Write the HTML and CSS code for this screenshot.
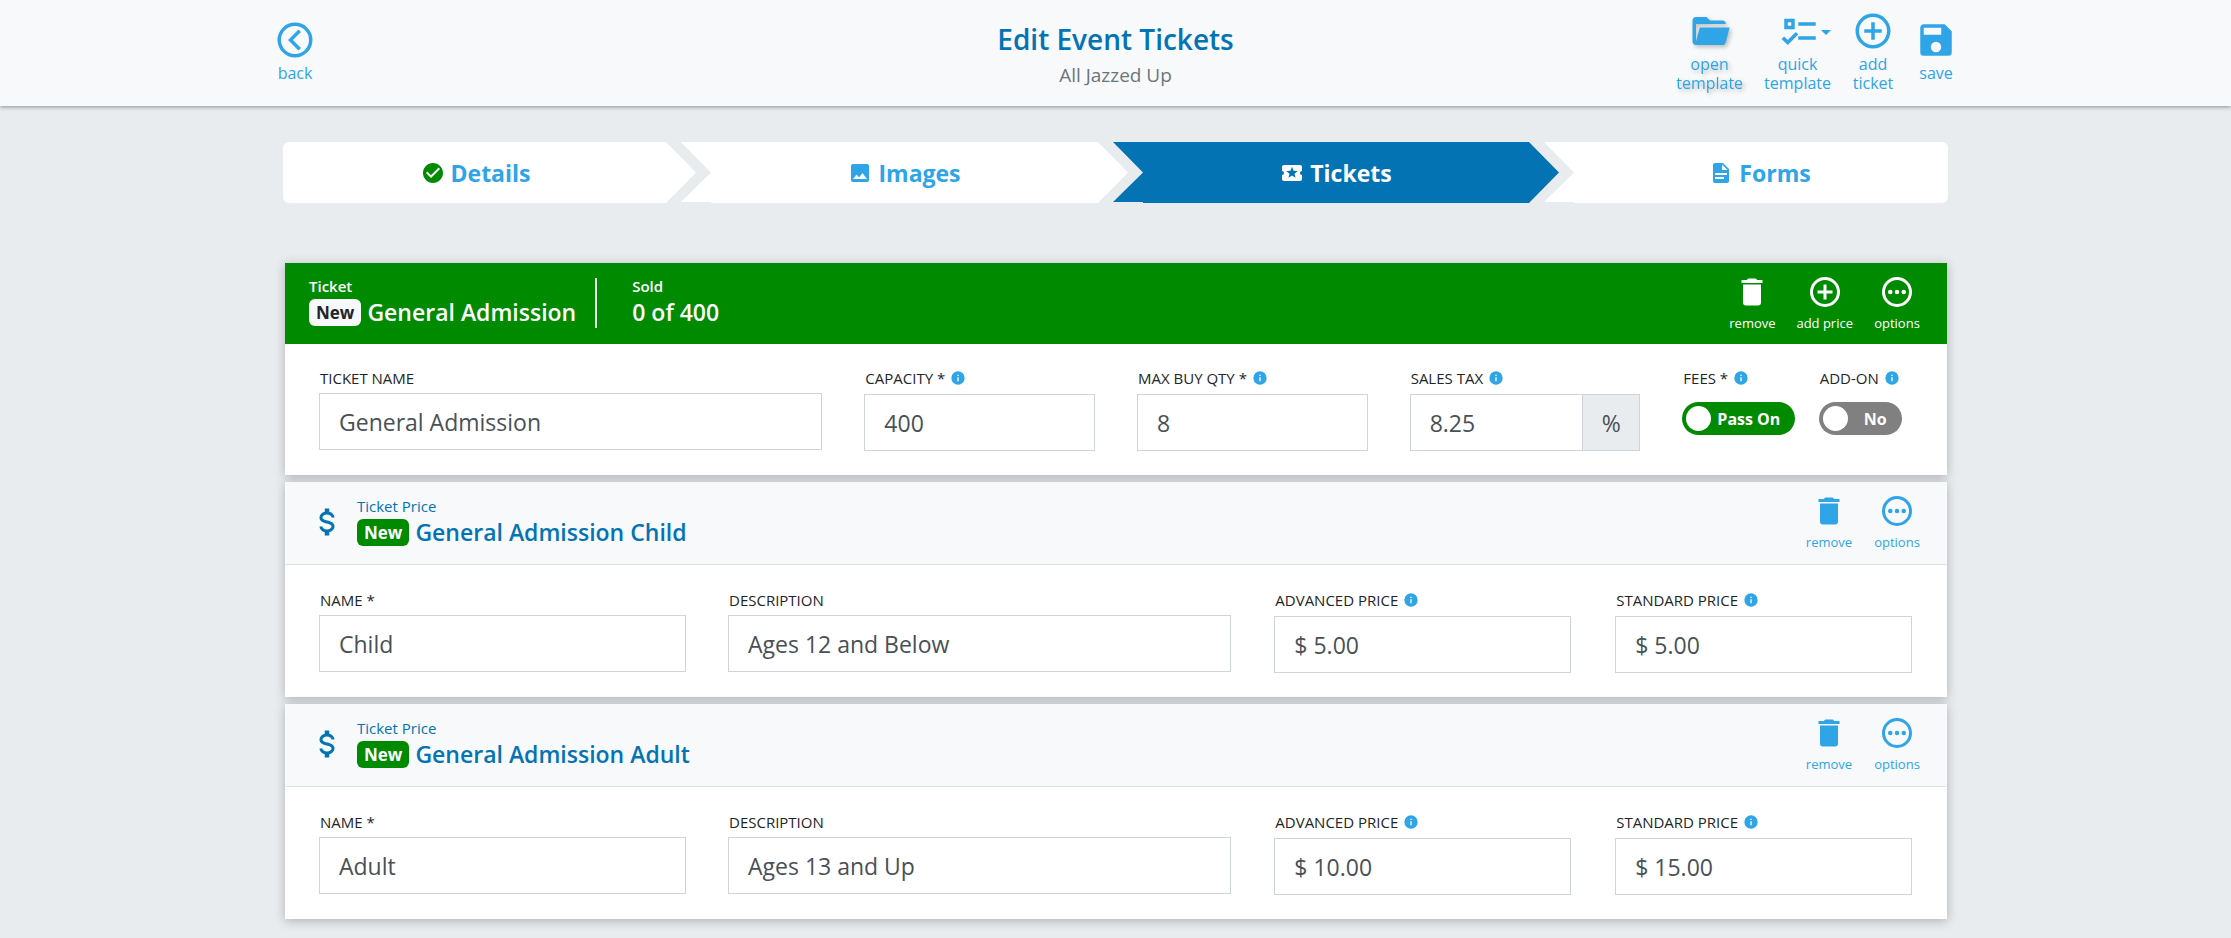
FILE: index.html
```html
<!DOCTYPE html>
<html lang="en">
<head>
<meta charset="utf-8">
<title>Edit Event Tickets</title>
<meta name="viewport" content="width=device-width, initial-scale=1">
<link rel="stylesheet" href="styles.css">
</head>
<body>
<svg class="sprite" aria-hidden="true">
  <symbol id="i-back" viewBox="0 0 24 24"><path d="M12 2a10 10 0 1 0 0 20 10 10 0 0 0 0-20m0 18a8 8 0 1 1 0-16 8 8 0 0 1 0 16M15.4 16.6 10.8 12l4.600-4.600L14 6l-6 6 6 6z"/></symbol>
  <symbol id="i-folder" viewBox="0 0 24 24"><path d="M19,20H4C2.89,20 2,19.1 2,18V6C2,4.890 2.890,4 4,4H10L12,6H19A2,2 0 0,1 21,8H4V18L6.140,10H23.210L20.930,18.500C20.700,19.370 19.920,20 19,20Z"/></symbol>
  <symbol id="i-checks" viewBox="0 0 24 24"><path d="M3,5H9V11H3V5M5,7V9H7V7H5M11,7H21V9H11V7M11,15H21V17H11V15M5,20L1.5,16.5L2.910,15.090L5,17.170L9.590,12.590L11,14L5,20Z"/></symbol>
  <symbol id="i-plus" viewBox="0 0 24 24"><path d="M12 2a10 10 0 1 0 0 20 10 10 0 0 0 0-20m0 18a8 8 0 1 1 0-16 8 8 0 0 1 0 16M13 7H11V11H7V13H11V17H13V13H17V11H13Z"/></symbol>
  <symbol id="i-dots" viewBox="0 0 24 24"><path d="M12 2a10 10 0 1 0 0 20 10 10 0 0 0 0-20m0 18a8 8 0 1 1 0-16 8 8 0 0 1 0 16"/><circle cx="7.5" cy="12" r="1.5"/><circle cx="12" cy="12" r="1.5"/><circle cx="16.5" cy="12" r="1.5"/></symbol>
  <symbol id="i-save" viewBox="0 0 24 24"><path d="M15,9H5V5H15M12,19A3,3 0 0,1 9,16A3,3 0 0,1 12,13A3,3 0 0,1 15,16A3,3 0 0,1 12,19M17,3H5C3.890,3 3,3.900 3,5V19A2,2 0 0,0 5,21H19A2,2 0 0,0 21,19V7L17,3Z"/></symbol>
  <symbol id="i-check" viewBox="0 0 24 24"><path d="M12 2C6.500 2 2 6.500 2 12S6.500 22 12 22 22 17.500 22 12 17.500 2 12 2M10 17L5 12L6.410 10.590L10 14.170L17.590 6.580L19 8L10 17Z"/></symbol>
  <symbol id="i-image" viewBox="0 0 24 24"><path d="M8.500,13.500L11,16.500L14.500,12L19,18H5M21,19V5C21,3.890 20.100,3 19,3H5A2,2 0 0,0 3,5V19A2,2 0 0,0 5,21H19A2,2 0 0,0 21,19Z"/></symbol>
  <symbol id="i-ticket" viewBox="0 0 24 24"><path d="M20 12c0-1.100.9-2 2-2V6c0-1.100-.9-2-2-2H4c-1.100 0-2 .9-2 2v4c1.100 0 2 .9 2 2s-.9 2-2 2v4c0 1.100.9 2 2 2h16c1.100 0 2-.9 2-2v-4c-1.100 0-2-.9-2-2zm-4.420 4.800L12 14.500l-3.580 2.300 1.080-4.120-3.290-2.690 4.240-.25L12 5.800l1.540 3.950 4.240.25-3.290 2.690 1.090 4.110z"/></symbol>
  <symbol id="i-file" viewBox="0 0 24 24"><path d="M13,9H18.500L13,3.500V9M6,2H14L20,8V20A2,2 0 0,1 18,22H6C4.890,22 4,21.100 4,20V4C4,2.890 4.890,2 6,2M15,18V16H6V18H15M18,14V12H6V14H18Z"/></symbol>
  <symbol id="i-info" viewBox="0 0 24 24"><path d="M13 9H11V7H13M13 17H11V11H13M12 2a10 10 0 1 0 0 20 10 10 0 0 0 0-20"/></symbol>
  <symbol id="i-trash" viewBox="0 0 24 24"><path d="M19,4H15.500L14.500,3H9.500L8.500,4H5V6H19M6,19A2,2 0 0,0 8,21H16A2,2 0 0,0 18,19V7H6V19Z"/></symbol>
  <symbol id="i-dollar" viewBox="0 0 24 24"><path d="M7,15H9C9,16.080 10.370,17 12,17C13.630,17 15,16.080 15,15C15,13.900 13.960,13.500 11.760,12.970C9.640,12.440 7,11.780 7,9C7,7.210 8.470,5.690 10.500,5.180V3H13.500V5.180C15.530,5.690 17,7.210 17,9H15C15,7.920 13.630,7 12,7C10.370,7 9,7.920 9,9C9,10.100 10.040,10.500 12.240,11.030C14.360,11.560 17,12.220 17,15C17,16.790 15.530,18.310 13.500,18.820V21H10.500V18.820C8.470,18.310 7,16.790 7,15Z"/></symbol>
</svg>

<header class="topbar">
  <div class="topbar-inner">
    <a class="tool" href="#"><svg><use href="#i-back"/></svg>back</a>
    <div class="heading">
      <h1>Edit Event Tickets</h1>
      <p>All Jazzed Up</p>
    </div>
    <div class="tools">
      <button class="tool tool-hover" type="button"><svg><use href="#i-folder"/></svg>open<br>template</button>
      <button class="tool" type="button"><span class="tool-menu"><svg><use href="#i-checks"/></svg><span class="caret"></span></span>quick<br>template</button>
      <button class="tool" type="button"><svg><use href="#i-plus"/></svg>add<br>ticket</button>
      <button class="tool" type="button"><svg><use href="#i-save"/></svg>save</button>
    </div>
  </div>
</header>

<main class="page">
  <nav class="steps" aria-label="Event steps">
    <a class="step" href="#"><svg class="done"><use href="#i-check"/></svg>Details</a>
    <a class="step" href="#"><svg><use href="#i-image"/></svg>Images</a>
    <a class="step active" href="#" aria-current="step"><svg><use href="#i-ticket"/></svg>Tickets</a>
    <a class="step" href="#"><svg><use href="#i-file"/></svg>Forms</a>
  </nav>

  <div class="cards">
    <section class="card ticket">
      <header class="card-head">
        <div class="summary">
          <p class="eyebrow">Ticket</p>
          <h2><span class="badge">New</span>General Admission</h2>
        </div>
        <div class="summary sold">
          <p class="eyebrow">Sold</p>
          <p class="amount">0 of 400</p>
        </div>
        <div class="actions">
          <button type="button"><svg><use href="#i-trash"/></svg>remove</button>
          <button type="button"><svg><use href="#i-plus"/></svg>add price</button>
          <button type="button"><svg><use href="#i-dots"/></svg>options</button>
        </div>
      </header>
      <div class="card-body">
        <div class="field">
          <label for="t-name">TICKET NAME</label>
          <input id="t-name" type="text" value="General Admission">
        </div>
        <div class="field">
          <label class="with-info" for="t-cap">CAPACITY * <svg><use href="#i-info"/></svg></label>
          <input id="t-cap" type="text" value="400">
        </div>
        <div class="field">
          <label class="with-info" for="t-max">MAX BUY QTY * <svg><use href="#i-info"/></svg></label>
          <input id="t-max" type="text" value="8">
        </div>
        <div class="field">
          <label class="with-info" for="t-tax">SALES TAX <svg><use href="#i-info"/></svg></label>
          <div class="group"><input id="t-tax" type="text" value="8.25"><span class="unit">%</span></div>
        </div>
        <div class="field field-switch">
          <label class="with-info" for="t-fees">FEES * <svg><use href="#i-info"/></svg></label>
          <label class="switch on"><input id="t-fees" type="checkbox" role="switch" checked><span>Pass On</span></label>
        </div>
        <div class="field field-switch">
          <label class="with-info" for="t-addon">ADD-ON <svg><use href="#i-info"/></svg></label>
          <label class="switch off"><input id="t-addon" type="checkbox" role="switch"><span>No</span></label>
        </div>
      </div>
    </section>

    <section class="card price">
      <header class="card-head">
        <svg class="dollar"><use href="#i-dollar"/></svg>
        <div class="summary">
          <p class="eyebrow">Ticket Price</p>
          <h2><span class="badge">New</span>General Admission Child</h2>
        </div>
        <div class="actions">
          <button type="button"><svg><use href="#i-trash"/></svg>remove</button>
          <button type="button"><svg><use href="#i-dots"/></svg>options</button>
        </div>
      </header>
      <div class="card-body">
        <div class="field">
          <label for="c-name">NAME *</label>
          <input id="c-name" type="text" value="Child">
        </div>
        <div class="field">
          <label for="c-desc">DESCRIPTION</label>
          <input id="c-desc" type="text" value="Ages 12 and Below">
        </div>
        <div class="field">
          <label class="with-info" for="c-adv">ADVANCED PRICE <svg><use href="#i-info"/></svg></label>
          <input id="c-adv" type="text" value="$ 5.00">
        </div>
        <div class="field">
          <label class="with-info" for="c-std">STANDARD PRICE <svg><use href="#i-info"/></svg></label>
          <input id="c-std" type="text" value="$ 5.00">
        </div>
      </div>
    </section>

    <section class="card price">
      <header class="card-head">
        <svg class="dollar"><use href="#i-dollar"/></svg>
        <div class="summary">
          <p class="eyebrow">Ticket Price</p>
          <h2><span class="badge">New</span>General Admission Adult</h2>
        </div>
        <div class="actions">
          <button type="button"><svg><use href="#i-trash"/></svg>remove</button>
          <button type="button"><svg><use href="#i-dots"/></svg>options</button>
        </div>
      </header>
      <div class="card-body">
        <div class="field">
          <label for="a-name">NAME *</label>
          <input id="a-name" type="text" value="Adult">
        </div>
        <div class="field">
          <label for="a-desc">DESCRIPTION</label>
          <input id="a-desc" type="text" value="Ages 13 and Up">
        </div>
        <div class="field">
          <label class="with-info" for="a-adv">ADVANCED PRICE <svg><use href="#i-info"/></svg></label>
          <input id="a-adv" type="text" value="$ 10.00">
        </div>
        <div class="field">
          <label class="with-info" for="a-std">STANDARD PRICE <svg><use href="#i-info"/></svg></label>
          <input id="a-std" type="text" value="$ 15.00">
        </div>
      </div>
    </section>
  </div>
</main>
</body>
</html>
```
FILE: styles.css
```css
:root {
  --blue: #2fa4e7;
  --deep: #0473b3;
  --green: #008a00;
  --page: #e9ecef;
  --pale: #f8f9fb;
  --line: #ced4da;
}

* { box-sizing: border-box; }

body {
  margin: 0;
  background: var(--page);
  color: #212529;
  font-family: "Open Sans", "Noto Sans", sans-serif;
  font-size: 16px;
}

h1, h2, p { margin: 0; font-weight: 400; }
a { text-decoration: none; }
button { border: 0; padding: 0; background: none; font: inherit; color: inherit; cursor: pointer; }
svg { display: block; fill: currentColor; flex: none; }
.sprite { display: none; }

/* Top bar */
.topbar {
  background: var(--pale);
  box-shadow: 0 1px 4px rgba(0, 0, 0, .4);
}
.topbar-inner {
  max-width: 1683px;
  min-height: 106px;
  margin: 0 auto;
  padding-bottom: 4px;
  display: grid;
  grid-template-columns: 1fr auto 1fr;
  align-items: center;
}
.heading { padding-top: 8px; text-align: center; }
.heading h1 { font-size: 28px; line-height: 40px; font-weight: 600; color: var(--deep); }
.heading p { font-size: 19px; line-height: 32px; color: #6c757d; }
.tools { display: flex; justify-content: flex-end; align-items: center; gap: 21px; }
.tool {
  justify-self: start;
  display: flex;
  flex-direction: column;
  align-items: center;
  color: var(--blue);
  font-size: 16px;
  line-height: 19px;
  text-align: center;
}
.tool svg { width: 42px; height: 42px; margin-bottom: 3px; }
.tool-hover { filter: drop-shadow(2px 2px 2px rgba(0, 0, 0, .25)); }
.tool-menu { align-self: flex-end; display: flex; align-items: center; }
.caret {
  border: 5px solid transparent;
  border-top-color: var(--blue);
  border-bottom: 0;
}

/* Steps */
.page { max-width: 1665px; margin: 0 auto; padding: 36px 0 19px; }
.steps { display: grid; grid-template-columns: 398fr 432fr 431fr 404fr; }
.step {
  height: 61px;
  margin-right: -15px;
  display: flex;
  align-items: center;
  justify-content: center;
  gap: 6px;
  background: #fff;
  color: var(--blue);
  font-size: 23px;
  font-weight: 700;
  clip-path: polygon(0 0, calc(100% - 30px) 0, 100% 50%, calc(100% - 30px) 100%, 30px 100%, 30px calc(100% - 1px), 0 calc(100% - 1px), 30px 50%);
}
.step:first-child {
  padding-right: 28px;
  border-radius: 6px 0 0 6px;
  clip-path: polygon(0 0, calc(100% - 30px) 0, 100% 50%, calc(100% - 30px) 100%, 0 100%);
}
.step:last-child {
  margin-right: 0;
  padding-left: 28px;
  border-radius: 0 6px 6px 0;
  clip-path: polygon(0 0, 100% 0, 100% 100%, 30px 100%, 30px calc(100% - 1px), 0 calc(100% - 1px), 30px 50%);
}
.step.active { background: var(--deep); color: #fff; }
.step svg { width: 24px; height: 24px; }
.step .done { color: var(--green); }

/* Cards */
.cards { margin: 60px 1px 0 2px; display: grid; gap: 7px; }
.card { background: #fff; box-shadow: 0 2px 10px rgba(0, 0, 0, .25); }
.card-head { display: flex; align-items: flex-start; padding: 13px 16px 16px 24px; }
.eyebrow { font-size: 15px; line-height: 20px; font-weight: 600; }
.card h2, .amount {
  display: flex;
  align-items: center;
  gap: 6px;
  font-size: 23px;
  line-height: 32px;
  font-weight: 600;
}
.badge {
  padding: 0 7px;
  border-radius: 6px;
  font-size: 17px;
  line-height: 27px;
  font-weight: 700;
}
.actions { margin: -2px 0 -5px auto; display: flex; }
.actions button {
  min-width: 68px;
  padding: 0 10px;
  display: flex;
  flex-direction: column;
  align-items: center;
  gap: 3px;
  font-size: 13px;
  line-height: 20px;
}
.actions svg { width: 36px; height: 36px; }

.ticket .card-head { background: var(--green); color: #fff; }
.ticket .badge { background: var(--pale); color: #212529; }
.ticket .actions { font-weight: 500; }
.sold { position: relative; margin-left: 56px; }
.sold::before {
  content: "";
  position: absolute;
  left: -37px;
  top: 2px;
  bottom: 0;
  width: 2px;
  background: #e9ecef;
}

.price .card-head { background: var(--pale); border-bottom: 1px solid #dee2e6; padding: 14px 16px 16px 24px; color: var(--deep); }
.price .eyebrow { font-weight: 500; }
.price .badge { background: var(--green); color: #fff; }
.price .actions { margin-top: -3px; color: var(--blue); }
.dollar { width: 36px; height: 36px; margin: 8px 12px 0 0; }

/* Fields */
.card-body { display: grid; padding: 22px 13px 24px; }
.ticket .card-body { grid-template-columns: 4fr 2fr 2fr 2fr 1fr 1fr; }
.price .card-body { grid-template-columns: 6fr 8fr 5fr 5fr; padding-top: 23px; }
.field { padding: 0 21px; min-width: 0; }
.price .field:nth-child(n+3) { padding: 0 22px; }
.field > label:first-child {
  display: flex;
  align-items: center;
  gap: 5px;
  padding-left: 1px;
  font-size: 15px;
  line-height: 24px;
  margin-bottom: 3px;
  white-space: nowrap;
}
.field > .with-info:first-child { margin-bottom: 4px; }
.field label svg { width: 16px; height: 16px; color: var(--blue); }
.field input[type="text"] {
  display: block;
  width: 100%;
  height: 57px;
  padding: 0 19px;
  border: 1px solid var(--line);
  border-radius: 0;
  background: #fff;
  color: #495057;
  font: inherit;
  font-size: 23px;
}
.group { display: flex; }
.group input[type="text"] { flex: 1; min-width: 0; }
.unit {
  width: 58px;
  margin-left: -1px;
  display: grid;
  place-items: center;
  border: 1px solid var(--line);
  background: var(--page);
  color: #495057;
  font-size: 23px;
}
.field-switch { padding: 0 0 0 21px; }
.switch {
  width: fit-content;
  height: 33px;
  margin-top: 12px;
  padding: 0 15px 0 4px;
  display: flex;
  align-items: center;
  border-radius: 17px;
  color: #fff;
  font-size: 16px;
  font-weight: 700;
}
.switch input {
  appearance: none;
  width: 25px;
  height: 25px;
  margin: 0;
  border-radius: 50%;
  background: #fff;
}
.switch.on { background: var(--green); gap: 6px; }
.switch.off { background: #808080; gap: 16px; }
```
